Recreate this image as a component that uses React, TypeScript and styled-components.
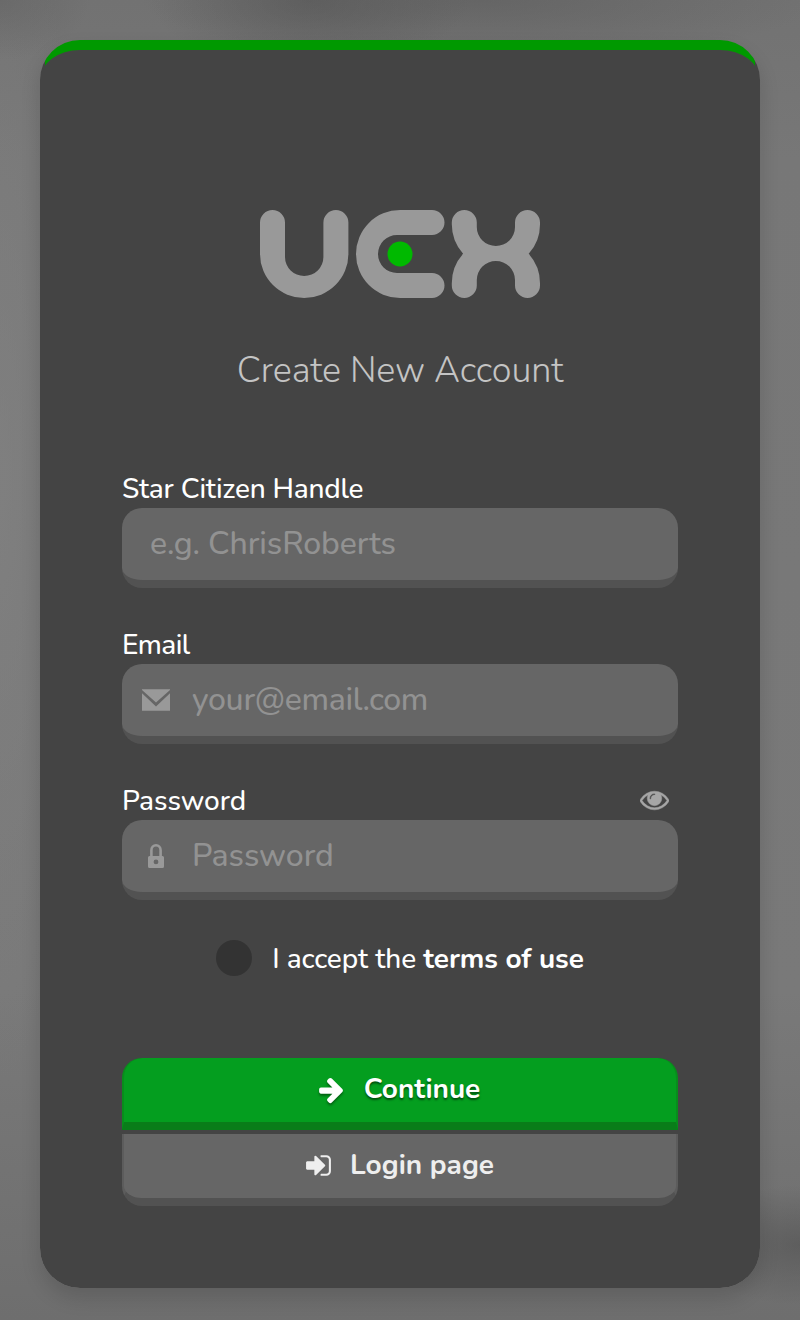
import React from "react";
import styled, { createGlobalStyle, css } from "styled-components";

const GlobalStyle = createGlobalStyle`
  * { box-sizing: border-box; }
  body {
    margin: 0;
    font-family: Nunito, Lato, "Open Sans", sans-serif;
    color: #fff;
  }
`;

const Page = styled.main`
  height: 1320px;
  padding: 40px;
  background:
    radial-gradient(ellipse 160px 70px at 310px 0, rgba(75, 75, 75, 0.4), transparent),
    radial-gradient(ellipse 340px 60px at 480px 0, rgba(85, 85, 85, 0.45), transparent),
    radial-gradient(ellipse 90px 60px at 0 0, rgba(90, 90, 90, 0.4), transparent),
    radial-gradient(ellipse 110px 60px at 800px 1245px, rgba(75, 75, 75, 0.5), transparent),
    radial-gradient(ellipse 90px 600px at 0 480px, rgba(132, 132, 132, 0.6), transparent),
    linear-gradient(180deg, #727272 0, #777 12%, #797979 75%, #6e6e6e 100%);
`;

const Card = styled.form`
  display: flex;
  flex-direction: column;
  height: 1248px;
  padding: 160px 82px 0;
  border-radius: 40px;
  border-top: 10px solid transparent;
  background:
    linear-gradient(#444, #444) padding-box,
    linear-gradient(90deg, #444 5px, #090 5px, #090 calc(100% - 5px), #444 calc(100% - 5px))
      0 0 / 100% 60px no-repeat border-box;
  box-shadow: 0 10px 20px rgba(0, 0, 0, 0.14);
`;

const Logo = styled.svg`
  display: block;
  width: 280px;
  height: 88px;
  margin: 0 auto;
`;

const Title = styled.h1`
  margin: 51px 0 0;
  height: 44px;
  font-size: 36px;
  line-height: 44px;
  font-weight: 300;
  letter-spacing: -0.1px;
  text-align: center;
  white-space: nowrap;
  color: #c4c4c4;
`;

const Fields = styled.div`
  display: flex;
  flex-direction: column;
  gap: 38px;
  margin-top: 77px;
`;

const LabelRow = styled.div`
  display: flex;
  align-items: center;
  justify-content: space-between;
  height: 38px;
  padding-right: 9.5px;
`;

const Label = styled.label<{ $spacing?: number }>`
  font-size: 28px;
  line-height: 38px;
  font-weight: 500;
  letter-spacing: ${({ $spacing = 0 }) => $spacing}px;
`;

const InputBox = styled.div<{ $inset?: boolean }>`
  display: flex;
  align-items: center;
  gap: 22px;
  height: 80px;
  padding: 0 20px 0 ${({ $inset }) => ($inset ? 28 : 20)}px;
  border-radius: 20px;
  border-bottom: 8px solid #525252;
  background: #666;
`;

const Input = styled.input<{ $spacing?: number }>`
  flex: 1;
  min-width: 0;
  padding: 0;
  border: 0;
  outline: 0;
  background: transparent;
  color: #fff;
  font: 500 32px/44px Nunito, Lato, "Open Sans", sans-serif;
  letter-spacing: ${({ $spacing = 0 }) => $spacing}px;
  &::placeholder { color: #929292; opacity: 1; }
`;

const Icon = styled.svg<{ $size?: number }>`
  flex: none;
  display: block;
  width: ${({ $size = 28 }) => $size}px;
  height: ${({ $size = 28 }) => $size}px;
  fill: currentColor;
`;

const MutedIcon = styled(Icon)`
  color: #999;
`;

const RevealButton = styled.button`
  margin: -3px 0 0;
  padding: 0;
  border: 0;
  background: none;
  color: #a6a6a6;
`;

const Terms = styled.label`
  display: flex;
  align-items: center;
  justify-content: center;
  gap: 20px;
  height: 36px;
  margin-top: 40px;
  font-size: 28px;
  line-height: 36px;
  font-weight: 500;
  letter-spacing: -0.08px;
  white-space: nowrap;
`;

const TermsText = styled.span`
  padding-top: 2px;
`;

const Check = styled.span`
  width: 36px;
  height: 36px;
  border-radius: 50%;
  background: #333;
`;

const Actions = styled.div`
  display: flex;
  flex-direction: column;
  gap: 4px;
  margin-top: 82px;
`;

const Button = styled.button<{ $primary?: boolean }>`
  display: flex;
  align-items: center;
  justify-content: center;
  gap: 18px;
  height: 72px;
  padding: 0 2px 2px 0;
  border: 0 solid transparent;
  border-width: 0 2px 8px;
  font: 700 28px/38px Nunito, Lato, "Open Sans", sans-serif;

  ${Icon} { margin: 1px -0.5px 0; }

  ${({ $primary }) =>
    $primary
      ? css`
          border-color: #098c1c #098c1c #097d19;
          border-radius: 20px 20px 0 0;
          background: #049e1f;
          color: #fff;
          text-shadow: 0 2px 2px rgba(0, 0, 0, 0.5);
          ${Icon} {
            margin: 1px 0.5px 0 -1.5px;
            filter: drop-shadow(0 2px 1px rgba(0, 0, 0, 0.4));
          }
        `
      : css`
          border-color: #5c5c5c #5c5c5c #525252;
          border-radius: 0 0 20px 20px;
          background: #666;
          color: #eee;
        `}
`;

const UexLogo = () => (
  <Logo viewBox="0 0 280 88" role="img" aria-label="UEX">
    <g fill="#999">
      <path d="M0 12.500a12.500 12.500 0 0 1 25 0V47a19.200 19 0 0 0 38.400 0V12.500a12.500 12.500 0 0 1 25 0V44a44.200 44 0 0 1-88.400 0z" />
      <path d="M140 0h32a12.500 12.500 0 0 1 0 25h-35a19 19 0 0 0 0 38h35a12.500 12.500 0 0 1 0 25h-32a44 44 0 0 1 0-88z" />
      <path d="M191.800 12.500a12.500 12.500 0 0 1 25 0V17a19.100 19 0 0 0 38.200 0v-4.500a12.500 12.500 0 0 1 25 0v1.800a44 44 0 0 1-11.300 29.500a44 44 0 0 1 11.300 29.500v2.200a12.500 12.500 0 0 1-25 0V70a19.100 19 0 0 0-38.200 0v5.500a12.500 12.500 0 0 1-25 0v-2.200a44 44 0 0 1 11.300-29.500a44 44 0 0 1-11.300-29.500z" />
    </g>
    <circle cx="140" cy="44" r="12.500" fill="#00b900" />
  </Logo>
);

const EnvelopeIcon = () => (
  <MutedIcon viewBox="0 0 28 28">
    <path d="M0 3.200h28V4L14 16.600 0 4zM0 7.200l14 13.400L28 7.200v17.600H0z" />
  </MutedIcon>
);

const LockIcon = () => (
  <MutedIcon viewBox="0 0 28 28">
    <path d="M9.400 15V8.200a4.600 4.900 0 0 1 9.200 0V15" fill="none" stroke="currentColor" strokeWidth="2.600" />
    <path
      fillRule="evenodd"
      d="M7.500 14h13q1.500 0 1.500 1.500v9q0 1.500-1.500 1.500h-13Q6 26 6 24.500v-9Q6 14 7.500 14zM14 17.500a2.400 2.400 0 1 0 0 4.800 2.400 2.400 0 0 0 0-4.800z"
    />
  </MutedIcon>
);

const EyeIcon = () => (
  <Icon viewBox="0 0 1792 1792" $size={29}>
    <path
      stroke="currentColor"
      strokeWidth="28"
      d="M1664 960q-152-236-381-353 61 104 61 225 0 185-131.500 316.500t-316.500 131.500-316.500-131.500-131.500-316.500q0-121 61-225-229 117-381 353 133 205 333.500 326.500t434.500 121.500 434.500-121.500 333.500-326.500zm-720-384q0-20-14-34t-34-14q-125 0-214.500 89.500t-89.500 214.500q0 20 14 34t34 14 34-14 14-34q0-86 61-147t147-61q20 0 34-14t14-34zm848 384q0 34-20 69-140 230-376.500 368.500t-499.500 138.500-499.500-139-376.500-368q-20-35-20-69t20-69q140-229 376.500-368t499.500-139 499.500 139 376.500 368q20 35 20 69z"
    />
  </Icon>
);

const ArrowIcon = () => (
  <Icon viewBox="0 0 1792 1792" $size={29}>
    <path d="M1664 960q0 54-37 91l-651 651q-39 37-91 37-51 0-90-37l-75-75q-38-38-38-91t38-91l293-293h-704q-52 0-84.500-37.500t-32.500-90.500v-128q0-53 32.500-90.500t84.500-37.500h704l-293-294q-38-36-38-90t38-90l75-75q38-38 90-38 53 0 91 38l651 651q37 35 37 90z" />
  </Icon>
);

const SignInIcon = () => (
  <Icon viewBox="0 0 1792 1792" $size={29}>
    <path d="M1312 896q0 26-19 45l-544 544q-19 19-45 19t-45-19-19-45v-288h-448q-26 0-45-19t-19-45v-384q0-26 19-45t45-19h448v-288q0-26 19-45t45-19 45 19l544 544q19 19 19 45zm352-352v704q0 119-84.500 203.500t-203.500 84.500h-320q-13 0-22.500-9.500t-9.500-22.500q0-4-1-20t-.5-26.500 3-23.500 10-19.500 20.500-6.500h320q66 0 113-47t47-113v-704q0-66-47-113t-113-47h-312l-11.500-1-11.500-3-8-5.500-7-9-2-13.500q0-4-1-20t-.5-26.500 3-23.500 10-19.500 20.500-6.500h320q119 0 203.500 84.500t84.500 203.500z" />
  </Icon>
);

export default function App() {
  return (
    <>
      <GlobalStyle />
      <Page>
        <Card>
          <UexLogo />
          <Title>Create New Account</Title>
          <Fields>
            <div>
              <LabelRow>
                <Label htmlFor="handle" $spacing={-0.2}>Star Citizen Handle</Label>
              </LabelRow>
              <InputBox $inset>
                <Input id="handle" placeholder="e.g. ChrisRoberts" $spacing={-0.1} />
              </InputBox>
            </div>
            <div>
              <LabelRow>
                <Label htmlFor="email" $spacing={-0.6}>Email</Label>
              </LabelRow>
              <InputBox>
                <EnvelopeIcon />
                <Input id="email" placeholder="your@email.com" $spacing={-0.3} />
              </InputBox>
            </div>
            <div>
              <LabelRow>
                <Label htmlFor="password" $spacing={-0.05}>Password</Label>
                <RevealButton type="button" aria-label="Show password">
                  <EyeIcon />
                </RevealButton>
              </LabelRow>
              <InputBox>
                <LockIcon />
                <Input id="password" type="password" placeholder="Password" $spacing={-0.05} />
              </InputBox>
            </div>
          </Fields>
          <Terms>
            <Check />
            <TermsText>
              I accept the <b>terms of use</b>
            </TermsText>
          </Terms>
          <Actions>
            <Button type="button" $primary>
              <ArrowIcon />
              Continue
            </Button>
            <Button type="button">
              <SignInIcon />
              Login page
            </Button>
          </Actions>
        </Card>
      </Page>
    </>
  );
}
